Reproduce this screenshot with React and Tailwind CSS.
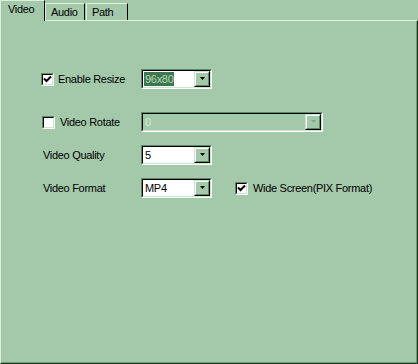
import React from "react";

function Sunken({ className = "", innerClass = "", children }) {
  return (
    <div className={"border border-t-[#5e8a66] border-l-[#5e8a66] border-b-white border-r-white " + className}>
      <div className={"w-full h-full border border-t-black border-l-black border-b-[#cfe3cf] border-r-[#cfe3cf] " + innerClass}>
        {children}
      </div>
    </div>
  );
}

function Checkbox({ checked }) {
  return (
    <Sunken className="w-[13px] h-[13px] shrink-0" innerClass="bg-white">
      {checked && (
        <svg width="9" height="9" viewBox="0 0 9 9" className="block">
          <path d="M1 3.5 L3.5 6 L8 1.5" stroke="black" strokeWidth="2" fill="none" />
        </svg>
      )}
    </Sunken>
  );
}

function Arrow({ disabled }) {
  return (
    <svg width="7" height="4" viewBox="0 0 7 4" className="block">
      <path d="M1 0 H6 L3.5 3 Z" fill={disabled ? "#7fa885" : "black"} />
    </svg>
  );
}

function Combo({ width, children, disabled }) {
  return (
    <Sunken className={"h-[20px] shrink-0 " + width} innerClass={"flex " + (disabled ? "bg-[#a4c8aa]" : "bg-white")}>
      <div className="flex-1 flex items-center pl-[1px] min-w-0">{children}</div>
      <div className="w-[16px] h-[16px] border border-t-[#cfe3cf] border-l-[#cfe3cf] border-b-black border-r-black">
        <div className="w-full h-full border border-t-white border-l-white border-b-[#5e8a66] border-r-[#5e8a66] bg-[#a4c8aa] flex items-center justify-center">
          <Arrow disabled={disabled} />
        </div>
      </div>
    </Sunken>
  );
}

export default function App() {
  return (
    <div
      className="w-[418px] h-[364px] bg-[#a4c8aa] text-black text-[11px] leading-[13px] tracking-[-0.3px] overflow-hidden"
      style={{ fontFamily: '"Liberation Sans", Arial, sans-serif' }}
    >
      <div className="flex items-end h-[20px]">
        <div className="relative z-10 h-[21px] -mb-px w-[45px] bg-[#a4c8aa] border-t border-l border-t-[#dcefdc] border-l-[#dcefdc] border-r border-r-black pl-[7px] pt-[2px]">
          Video
        </div>
        <div className="h-[17px] w-[40px] border-t border-l border-t-[#dcefdc] border-l-[#dcefdc] border-r border-r-black pl-[5px] pt-[2px]">
          Audio
        </div>
        <div className="ml-px h-[17px] w-[42px] border-t border-l border-t-[#dcefdc] border-l-[#dcefdc] border-r border-r-black pl-[5px] pt-[2px]">
          Path
        </div>
      </div>
      <div className="h-[344px] border-t border-l border-t-[#dcefdc] border-l-[#dcefdc] border-r border-b border-r-[#1e3a22] border-b-[#1e3a22]">
        <div className="h-full border-r border-b border-r-[#6f9a75] border-b-[#6f9a75] pt-[48px] pl-[40px] flex flex-col">
          <div className="flex items-center h-[20px]">
            <div className="w-[100px] flex items-center gap-[4px]">
              <Checkbox checked />
              <span>Enable Resize</span>
            </div>
            <Combo width="w-[71px]">
              <span className="bg-[#3f7650] text-[#b4d8b6] px-[1px] leading-[14px]">96x80</span>
            </Combo>
          </div>
          <div className="flex items-center h-[20px] mt-[23px]">
            <div className="w-[100px] flex items-center gap-[5px] pl-px">
              <Checkbox />
              <span>Video Rotate</span>
            </div>
            <Combo width="w-[182px]" disabled>
              <span className="text-[#d4e8d4] pl-[1px]">0</span>
            </Combo>
          </div>
          <div className="flex items-center h-[20px] mt-[13px]">
            <div className="w-[100px] pl-[2px]">Video Quality</div>
            <Combo width="w-[71px]">
              <span className="pl-[1px]">5</span>
            </Combo>
          </div>
          <div className="flex items-center h-[20px] mt-[13px]">
            <div className="w-[100px] pl-[2px]">Video Format</div>
            <Combo width="w-[71px]">
              <span className="pl-[1px]">MP4</span>
            </Combo>
            <div className="ml-[23px] flex items-center gap-[5px]">
              <Checkbox checked />
              <span>Wide Screen(PIX Format)</span>
            </div>
          </div>
        </div>
      </div>
    </div>
  );
}
